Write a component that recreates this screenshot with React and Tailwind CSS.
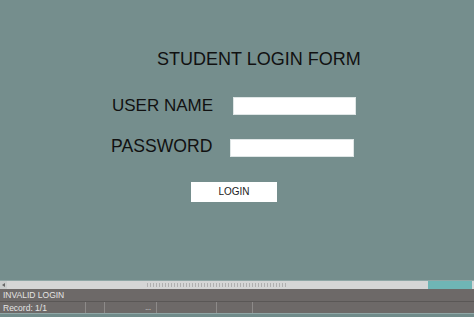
export default function App() {
  const font = { fontFamily: '"Liberation Sans", Arial, sans-serif' };
  return (
    <div className="w-[474px] h-[317px] flex flex-col overflow-hidden bg-[#758e8d]" style={font}>
      <div className="h-[280px] flex flex-col pt-[50px] text-[#111]">
        <div className="ml-[157px] text-[18px] leading-[18px]">STUDENT LOGIN FORM</div>
        <div className="mt-[29px] flex items-start ml-[112px]">
          <div className="w-[121px] text-[17px] leading-[17px]">USER NAME</div>
          <div className="w-[123px] h-[18px] bg-white border border-[#dfe6e6]"></div>
        </div>
        <div className="mt-[23px] flex items-start ml-[111px]">
          <div className="w-[119px] text-[17.6px] leading-[17px]">PASSWORD</div>
          <div className="mt-[1px] w-[124px] h-[18px] bg-white border border-[#dfe6e6]"></div>
        </div>
        <div className="mt-[25px] ml-[191px] w-[86px] h-[20px] bg-white flex items-center justify-center text-[10px] leading-[10px] text-[#222]">
          LOGIN
        </div>
      </div>
      <div className="h-[9px] flex border-t border-[#8fa7a6]">
        <div className="w-[7px] bg-[#c9cccc] flex items-center justify-center">
          <div className="w-0 h-0 border-y-[2px] border-y-transparent border-r-[3px] border-r-[#666]"></div>
        </div>
        <div className="w-[421px] bg-[#d5d6d6] flex items-center">
          <div className="ml-[140px] w-[141px] h-[4px] bg-[repeating-linear-gradient(90deg,#b0b0b0_0px,#b0b0b0_1px,transparent_1px,transparent_3px)]"></div>
        </div>
        <div className="w-[44px] bg-[#6fb5b5]"></div>
        <div className="flex-1 bg-[#d5d6d6]"></div>
      </div>
      <div className="h-[13px] bg-[#6d6968] border-b border-[#5a5756] flex items-center pl-[3px] text-[8.5px] leading-[8px] text-[#e4e4e4]">
        INVALID LOGIN
      </div>
      <div className="h-[11px] bg-[#6d6968] flex text-[8.5px] leading-[8px] text-[#e4e4e4]">
        <div className="w-[86px] flex items-center pl-[3px] border-r border-[#8d8a89]">Record: 1/1</div>
        <div className="w-[19px] border-r border-[#8d8a89]"></div>
        <div className="w-[52px] border-r border-[#8d8a89] flex items-end justify-end pr-[5px] pb-[1px] text-[7px]">...</div>
        <div className="w-[60px] border-r border-[#8d8a89]"></div>
        <div className="w-[36px] border-r border-[#8d8a89]"></div>
        <div className="flex-1"></div>
      </div>
      <div className="flex-1 bg-[#708b8a] border-t border-[#8fa7a6]"></div>
    </div>
  );
}
